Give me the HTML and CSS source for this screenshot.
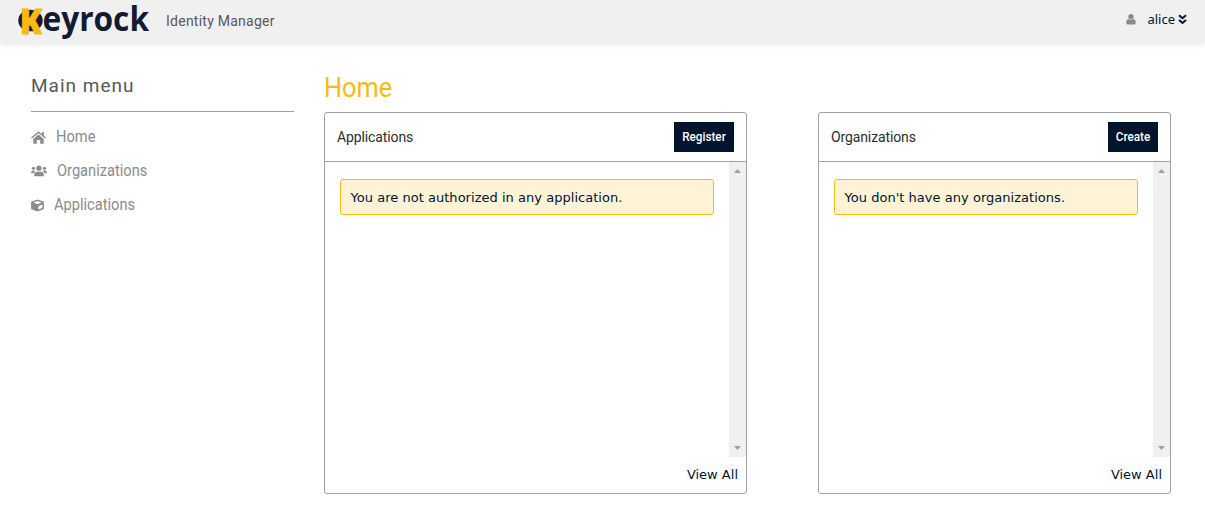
FILE: index.html
```html
<!DOCTYPE html>
<html lang="en">
<head>
<meta charset="utf-8">
<title>Identity Manager</title>
<link rel="stylesheet" href="styles.css">
</head>
<body>
<header class="topbar">
  <svg class="logo" width="134" height="43" viewBox="0 0 134 43" role="img" aria-label="Keyrock">
    <ellipse class="logo-disc" cx="12.5" cy="20.5" rx="12.2" ry="10.8"/>
    <text class="logo-k" x="1.8" y="33.7" textLength="22.4" lengthAdjust="spacingAndGlyphs">K</text>
    <text class="logo-word" x="24.5" y="30.8" textLength="106.5" lengthAdjust="spacingAndGlyphs">eyrock</text>
  </svg>
  <span class="tagline">Identity Manager</span>
  <div class="user">
    <svg width="10" height="11" viewBox="0 0 10 11"><circle cx="5" cy="2.8" r="2.7"/><path d="M2.4 5Q5 7.2 7.6 5Q10 5.6 9.7 9.3Q9.6 10.6 8.3 10.6H1.7Q.4 10.6.3 9.3Q0 5.6 2.4 5Z"/></svg>
    <span class="user-name">alice</span>
    <svg class="chevrons" width="9" height="11" viewBox="0 0 9 11"><path d="M1 1.2l3.5 3 3.5-3M1 6l3.5 3L8 6"/></svg>
  </div>
</header>
<div class="page">
  <nav class="sidebar">
    <h2 class="menu-title">Main menu</h2>
    <a class="item"><svg width="15" height="13" viewBox="0 0 15 13"><path d="M7.5 3.6L2.3 7.9V12.2Q2.3 12.7 2.8 12.7H5.8V9H9.2V12.7H12.2Q12.7 12.7 12.7 12.2V7.9Z"/><path class="roof" d="M.5 7L7.5 1.2 14.5 7"/><path d="M11 1H12.8V5H11Z"/></svg><span>Home</span></a>
    <a class="item"><svg width="16" height="12" viewBox="0 0 17 12"><circle cx="8.5" cy="3" r="2.8"/><circle cx="2.6" cy="3.1" r="1.7"/><circle cx="14.4" cy="3.1" r="1.7"/><path d="M3.4 11.5V10Q3.4 6.7 6.4 6.7H10.6Q13.6 6.7 13.6 10V11.5ZM.2 8.5V7.2Q.2 5.4 2 5.4H3.4Q4.3 5.4 4.8 5.9Q3.1 6.8 2.8 8.5ZM16.8 8.5V7.2Q16.8 5.4 15 5.4H13.6Q12.7 5.4 12.2 5.9Q13.9 6.8 14.2 8.5Z"/></svg><span>Organizations</span></a>
    <a class="item"><svg width="13" height="13" viewBox="0 0 13.4 13"><path d="M6.7.2L12.8 2.5Q13.3 2.8 13.3 3.3V9.4Q13.3 10 12.8 10.3L6.7 12.8 .7 10.3Q.1 10 .1 9.4V3.3Q.1 2.8.6 2.5Z"/><path class="cut" d="M6.7 1.9L10.9 3.5 6.7 5.2 2.5 3.5ZM7.7 7.2L11.7 5.5V8.9L7.7 10.8Z"/></svg><span>Applications</span></a>
  </nav>
  <main class="content">
    <h1 class="title">Home</h1>
    <div class="panels">
      <section class="panel">
        <div class="panel-head"><h3>Applications</h3><button class="btn register"><span>Register</span></button></div>
        <div class="panel-body">
          <div class="list"><p class="notice">You are not authorized in any application.</p></div>
          <div class="scrollbar"><svg width="7" height="4"><path d="M0 4L3.5 0 7 4Z"/></svg><svg width="7" height="4"><path d="M0 0L3.5 4 7 0Z"/></svg></div>
        </div>
        <a class="view-all">View All</a>
      </section>
      <section class="panel">
        <div class="panel-head"><h3>Organizations</h3><button class="btn create"><span>Create</span></button></div>
        <div class="panel-body">
          <div class="list"><p class="notice">You don't have any organizations.</p></div>
          <div class="scrollbar"><svg width="7" height="4"><path d="M0 4L3.5 0 7 4Z"/></svg><svg width="7" height="4"><path d="M0 0L3.5 4 7 0Z"/></svg></div>
        </div>
        <a class="view-all">View All</a>
      </section>
    </div>
  </main>
</div>
</body>
</html>
```
FILE: styles.css
```css
* { box-sizing: border-box; }
body { margin: 0; background: #fff; color: #00142e; font-family: "DejaVu Sans", Verdana, sans-serif; font-size: 13px; }
h1, h2, h3, p { margin: 0; font-weight: 400; }
svg { display: block; flex: none; }

.topbar { display: flex; align-items: center; height: 43px; padding: 0 18px; background: #f0f0f0; box-shadow: 0 1px 6px rgba(0, 0, 0, .12); }
.logo { overflow: visible; font-family: "Open Sans", sans-serif; font-weight: 700; }
.logo-disc, .logo-word { fill: #131b30; }
.logo-k { fill: #fdb913; stroke: #fdb913; stroke-width: .8; font-size: 36px; font-weight: 800; }
.logo-word { font-size: 34px; }
.tagline { margin-left: 14px; padding-bottom: 2px; font: 14px/20px Roboto, sans-serif; letter-spacing: .25px; color: #58585a; }
.user { display: flex; align-items: center; margin-left: auto; height: 39px; margin-bottom: 5px; fill: #8a8a8a; }
.user-name { margin-left: 11px; font: 13px/20px "Noto Sans", sans-serif; }
.chevrons { margin-left: 3px; fill: none; stroke: #00142e; stroke-width: 2; }

.page { display: flex; }
.sidebar { width: 263px; margin-left: 31px; font-family: Roboto, sans-serif; }
.menu-title { height: 69px; margin-bottom: 8px; padding-top: 31px; border-bottom: 1px solid #a0a0a0; color: #58585a; font-size: 19px; line-height: 24px; letter-spacing: 1px; }
.item { display: flex; align-items: center; height: 34px; color: #8b8b8b; fill: #8b8b8b; font-size: 16px; }
.item span { margin-left: 10px; padding-bottom: 1px; transform: scaleX(.915); transform-origin: left; }
.roof { fill: none; stroke: #8b8b8b; stroke-width: 1.5; }
.cut { fill: #fff; }

.content { width: 847px; margin-left: 30px; }
.title { height: 69px; padding-top: 28px; color: #fdb913; font: 28px/34px Roboto, sans-serif; transform: scaleX(.905); transform-origin: left; }
.panels { display: grid; grid-template-columns: 423px 353px; column-gap: 71px; }
.panel { height: 382px; border: 1px solid #a0a0a0; border-radius: 3px; }
.panel-head { display: flex; align-items: center; justify-content: space-between; height: 49px; padding: 0 12px; border-bottom: 1px solid #a0a0a0; }
.panel-head h3 { font: 14px/20px Roboto, sans-serif; color: #2d2d2d; letter-spacing: -.12px; }
.btn { height: 30px; padding: 0; border: 0; background: #00142e; color: #fff; font: 500 13px/30px Roboto, sans-serif; }
.btn span { display: block; transform: scaleX(.9); }
.register { width: 60px; }
.create { width: 50px; }
.panel-body { display: flex; height: 295px; }
.list { flex: 1; padding: 17px 15px; }
.notice { height: 36px; padding-left: 9.5px; border: 1px solid #fdb913; border-radius: 3px; background: #fff3d6; line-height: 35px; letter-spacing: .03px; white-space: nowrap; }
.scrollbar { display: flex; flex-direction: column; align-items: center; justify-content: space-between; width: 17px; padding: 7px 0; background: #f0f0f0; fill: #a0a0a0; }
.view-all { display: block; padding-right: 8px; text-align: right; line-height: 36px; }
```
